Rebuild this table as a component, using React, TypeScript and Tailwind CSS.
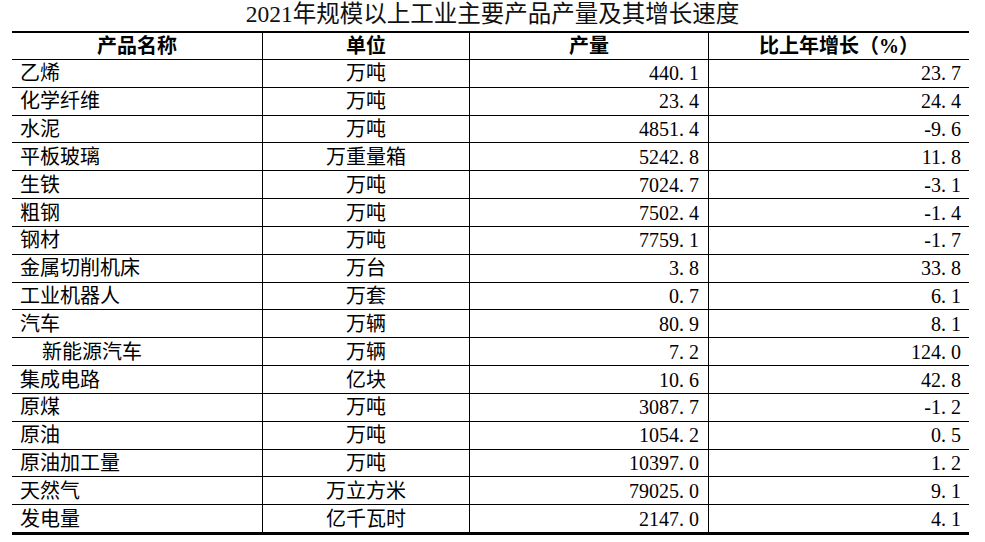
import React from 'react';

interface Row {
  name: string;
  unit: string;
  output: string;
  growth: string;
  indent?: boolean;
}

const rows: Row[] = [
  { name: '乙烯', unit: '万吨', output: '440.1', growth: '23.7' },
  { name: '化学纤维', unit: '万吨', output: '23.4', growth: '24.4' },
  { name: '水泥', unit: '万吨', output: '4851.4', growth: '-9.6' },
  { name: '平板玻璃', unit: '万重量箱', output: '5242.8', growth: '11.8' },
  { name: '生铁', unit: '万吨', output: '7024.7', growth: '-3.1' },
  { name: '粗钢', unit: '万吨', output: '7502.4', growth: '-1.4' },
  { name: '钢材', unit: '万吨', output: '7759.1', growth: '-1.7' },
  { name: '金属切削机床', unit: '万台', output: '3.8', growth: '33.8' },
  { name: '工业机器人', unit: '万套', output: '0.7', growth: '6.1' },
  { name: '汽车', unit: '万辆', output: '80.9', growth: '8.1' },
  { name: '新能源汽车', unit: '万辆', output: '7.2', growth: '124.0', indent: true },
  { name: '集成电路', unit: '亿块', output: '10.6', growth: '42.8' },
  { name: '原煤', unit: '万吨', output: '3087.7', growth: '-1.2' },
  { name: '原油', unit: '万吨', output: '1054.2', growth: '0.5' },
  { name: '原油加工量', unit: '万吨', output: '10397.0', growth: '1.2' },
  { name: '天然气', unit: '万立方米', output: '79025.0', growth: '9.1' },
  { name: '发电量', unit: '亿千瓦时', output: '2147.0', growth: '4.1' },
];

// SimSun-style number: the period takes a full digit width
function Num({ value }: { value: string }) {
  const [a, b] = value.split('.');
  return (
    <span>
      {a}
      <span className="inline-block w-[10px] text-left">.</span>
      {b}
    </span>
  );
}

const cols = 'grid grid-cols-[251px_207px_239px_260px]';

export default function App() {
  return (
    <div className="w-[985px] h-[542px] bg-white text-black font-['Liberation_Serif','Noto_Sans_CJK_SC',serif]">
      <h1 className="h-[31px] leading-[28px] text-center text-[23.5px] font-normal text-[#111]">
        2021年规模以上工业主要产品产量及其增长速度
      </h1>
      <div className="ml-[12px] w-[957px] border-t-2 border-b-2 border-black text-[20px]">
        <div className={`${cols} h-[27px] border-b border-black font-bold leading-none`}>
          <div className="flex items-center justify-center border-r border-black">产品名称</div>
          <div className="flex items-center justify-center border-r border-black">单位</div>
          <div className="flex items-center justify-center border-r border-black">产量</div>
          <div className="flex items-center justify-center">比上年增长（%）</div>
        </div>
        {rows.map((r, i) => (
          <div key={i} className={`${cols} h-[27.83px] leading-none border-b border-black`}>
            <div className={`flex items-center border-r border-black ${r.indent ? 'pl-[30px]' : 'pl-[8px]'}`}>
              {r.name}
            </div>
            <div className="flex items-center justify-center border-r border-black">{r.unit}</div>
            <div className="flex items-center justify-end pr-[9px] border-r border-black">
              <Num value={r.output} />
            </div>
            <div className="flex items-center justify-end pr-[8px]">
              <Num value={r.growth} />
            </div>
          </div>
        ))}
      </div>
    </div>
  );
}
